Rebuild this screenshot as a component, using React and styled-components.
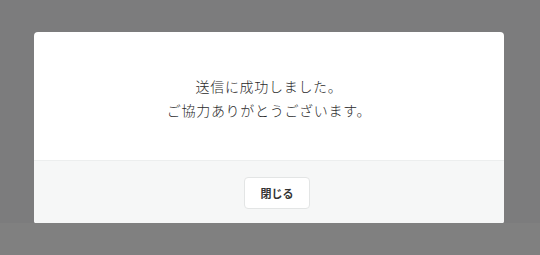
import React from 'react';
import styled, { createGlobalStyle } from 'styled-components';

const GlobalStyle = createGlobalStyle`
  html, body {
    margin: 0;
    padding: 0;
    background: #808080;
  }
  body {
    font-family: "Noto Sans CJK JP", "Noto Sans", sans-serif;
    -webkit-font-smoothing: antialiased;
  }
`;

const Backdrop = styled.div`
  box-sizing: border-box;
  height: 223px;
  padding: 32px 0 0 34px;
  background: #7c7c7d;
`;

const Modal = styled.div`
  width: 470px;
  background: #fff;
  border-radius: 4px;
  overflow: hidden;
`;

const Body = styled.div`
  box-sizing: border-box;
  height: 128px;
  padding-top: 4px;
  display: flex;
  flex-direction: column;
  align-items: center;
  justify-content: center;
  color: #2b2b2b;
  font-size: 14px;
  font-weight: 300;
  letter-spacing: 0.7px;
  line-height: 24px;
  text-align: center;
`;

const Line = styled.p`
  margin: 0;
`;

const Footer = styled.div`
  box-sizing: border-box;
  height: 64px;
  display: flex;
  align-items: center;
  justify-content: center;
  padding-left: 16px;
  background: #f6f7f7;
  border-top: 1px solid #eceeee;
`;

const Button = styled.button`
  width: 66px;
  height: 32px;
  margin-top: 1px;
  padding: 0;
  background: #fff;
  border: 1px solid #e3e5e5;
  border-radius: 4px;
  font-family: inherit;
  font-size: 11px;
  font-weight: 700;
  color: #333;
  cursor: pointer;
`;

const App = () => (
  <>
    <GlobalStyle />
    <Backdrop>
      <Modal>
        <Body>
          <Line>送信に成功しました。</Line>
          <Line>ご協力ありがとうございます。</Line>
        </Body>
        <Footer>
          <Button>閉じる</Button>
        </Footer>
      </Modal>
    </Backdrop>
  </>
);

export default App;
